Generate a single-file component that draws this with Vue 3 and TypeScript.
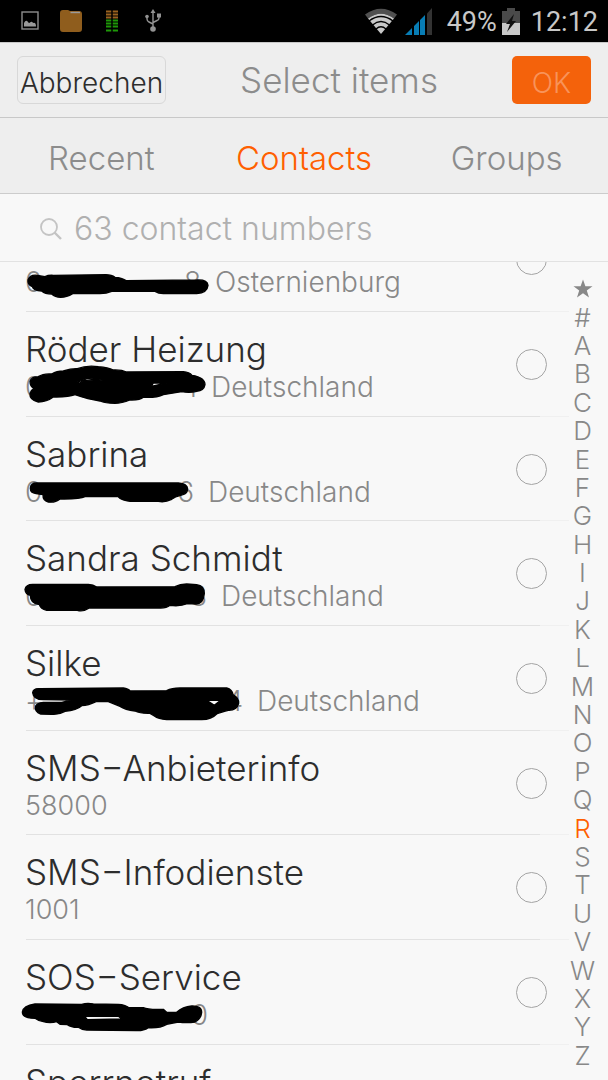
<script setup lang="ts">
import { ref } from 'vue'

interface Contact {
  id: number
  name: string
  lead?: string
  tail?: string
  number?: string
  width?: number
  place?: string
  viewBox?: string
  mark?: string
}

const tabs: string[] = ['Recent', 'Contacts', 'Groups']
const activeTab = ref('Contacts')
const activeLetter = ref('R')
const letters: string[] = ['★', '#', ...'ABCDEFGHIJKLMNOPQRSTUVWXYZ']
const query = ref('')
const selected = ref<number[]>([])

const contacts: Contact[] = [
  {
    id: 1, name: '', lead: '0', tail: '8', width: 176, place: 'Osternienburg',
    viewBox: '0 261 912 315',
    mark: 'M84 480 Q90 463 112 466 L135 470 Q145 465 160 466 L318 464 Q335 464 345 472 Q365 473 378 482 L590 480 Q622 478 624 496 Q622 518 590 521 L490 521 Q475 520 465 514 L335 514 Q320 521 300 521 L218 521 Q200 532 182 532 Q165 531 155 522 Q135 522 125 513 Q100 512 97 500 Q82 494 84 480Z',
  },
  {
    id: 2, name: 'Röder Heizung', lead: '0', tail: '1', width: 172, place: 'Deutschland',
    viewBox: '0 -24 912 315',
    mark: 'M90 184 Q94 170 115 170 Q130 160 155 162 Q170 153 190 153 Q215 145 232 146 Q260 135 295 140 Q325 143 340 150 Q365 149 380 156 L550 155 Q568 156 576 166 Q615 172 615 194 Q612 212 590 214 Q570 220 545 215 L490 224 Q470 234 430 232 Q420 241 390 240 Q365 250 345 250 Q315 250 300 243 Q265 238 225 224 Q205 232 160 231 Q140 246 115 246 Q88 240 90 220 Q93 210 102 206 Q90 200 90 184Z M230 187 L262 175 L328 183 L290 179 L250 182 L240 189Z M454 199 L460 189 L500 189Z',
  },
  {
    id: 3, name: 'Sabrina', lead: '0', tail: '6', width: 169, place: 'Deutschland',
    viewBox: '0 291 912 315',
    mark: 'M91 505 Q92 489 110 489 L535 489 Q562 491 563 507 Q562 523 542 526 Q525 530 515 538 Q495 548 475 544 L390 544 Q365 542 354 530 L255 530 Q240 538 180 537 Q165 549 145 546 Q128 541 129 524 L108 521 Q91 519 91 505Z',
  },
  {
    id: 4, name: 'Sandra Schmidt', lead: '0', tail: '3', width: 182, place: 'Deutschland',
    viewBox: '0 -57 912 315',
    mark: 'M75 148 Q78 133 98 133 L265 133 Q280 134 290 141 L525 140 Q540 132 560 132 L590 134 Q613 138 613 160 Q611 190 588 192 L562 191 Q540 200 510 196 Q498 206 475 204 L268 204 Q250 216 232 211 L140 211 Q122 207 118 194 Q91 191 91 166 Q76 162 75 148Z',
  },
  {
    id: 5, name: 'Silke', lead: '+', tail: '4', width: 218, place: 'Deutschland',
    viewBox: '0 258 912 315',
    mark: 'M98 458 Q100 444 120 446 L370 444 Q385 446 390 453 L500 452 Q515 444 540 444 L680 444 Q697 449 699 464 Q717 474 716 490 Q710 512 685 511 Q660 517 650 522 Q635 538 605 539 L500 539 Q475 537 463 528 L450 520 Q420 521 405 513 Q375 509 360 499 L325 485 L290 484 Q265 496 245 497 Q230 511 195 514 Q175 525 155 523 L122 522 Q103 517 107 498 Q112 488 130 487 L185 487 L218 480 L130 479 Q100 479 98 458Z M620 481 L662 481 L643 496Z',
  },
  { id: 6, name: 'SMS−Anbieterinfo', number: '58000' },
  { id: 7, name: 'SMS−Infodienste', number: '1001' },
  {
    id: 8, name: 'SOS−Service', lead: '', tail: '0', width: 183,
    viewBox: '0 0 912 315',
    mark: 'M67 216 Q70 197 105 192 L245 193 Q262 188 280 192 L355 193 Q375 194 385 202 L430 203 Q445 210 490 208 L500 217 L530 217 Q548 200 575 198 Q605 197 605 217 Q603 237 585 246 Q560 250 535 246 L500 253 Q480 265 445 263 Q430 273 410 272 L260 270 Q245 270 235 262 Q215 263 202 254 L180 253 L170 245 Q150 251 130 245 Q115 243 105 235 Q67 235 67 216Z M254 229 L355 229 L366 237 L262 239Z',
  },
  { id: 9, name: 'Sperrnotruf', number: '' },
]
</script>

<template>
  <div class="screen">
    <div class="status">
      <div class="status-left">
        <svg class="ic" width="20" height="20" viewBox="0 0 20 20">
          <rect x="2" y="1" width="16" height="17" fill="none" stroke="#8d8d8d" stroke-width="1.4" />
          <path d="M4 15.500V12Q6 8 8 11Q9 12.500 10 11.500Q12 10 13 12Q16 11 16 15.500Z" fill="#999" />
        </svg>
        <svg class="ic" width="22" height="24" viewBox="0 0 22 24">
          <path d="M0 4Q0 1 3 1H8L10 2H19Q22 2 22 5V20Q22 23 19 23H3Q0 23 0 20Z" fill="#8f5d1d" />
          <path d="M10.500 3.500H20" stroke="#9a9a9a" stroke-width="1.400" />
        </svg>
        <svg class="ic" width="20" height="22" viewBox="-3 0 20 22">
          <path d="M1 1.500H13M1 4.500H13M1 7.500H13" stroke="#9a6220" stroke-width="2" />
          <path d="M1 10.500H13M1 13.500H13M1 16.500H13M1 20.500H13" stroke="#1e9808" stroke-width="2" />
          <path d="M7 0V22" stroke="#000" stroke-width="1.500" />
        </svg>
        <svg class="ic" width="19" height="24" viewBox="-3 0 19 24" fill="none" stroke="#939393" stroke-width="1.400">
          <path d="M8 3V20M2 8V10Q2 12 4 13L8 15M14 7V9Q14 11 12 11.500L8 13.500" />
          <path d="M8 0L5.500 4H10.500Z" fill="#939393" stroke="none" />
          <circle cx="8" cy="20" r="2.800" fill="#939393" stroke="none" />
          <circle cx="2" cy="7.500" r="1.800" fill="#939393" stroke="none" />
          <path d="M12 4.500H16V8.500H12Z" fill="#939393" stroke="none" />
        </svg>
      </div>
      <div class="status-right">
        <svg width="32" height="26" viewBox="0 0 32 26">
          <path d="M0 6.500Q16 -5 32 6.500L29 10.500Q16 1 3 10.500Z" fill="#505050" />
          <path d="M3 10.500Q16 1 29 10.500L16 26Z" fill="#c8c8c8" />
          <path d="M4 13Q16 4 28 13M7.500 17Q16 10 24.500 17M11 21Q16 16.500 21 21" fill="none" stroke="#000" stroke-width="1.400" />
        </svg>
        <svg width="28" height="27" viewBox="0 0 28 27">
          <path d="M0 27L8 19V27Z M9 18L14 13V27H9Z M15 12L20 7V27H15Z" fill="#087db5" />
          <path d="M22 5.500L27 0V27H22Z" fill="#333" />
          <path d="M7.500 18V27" stroke="#000" />
        </svg>
        <span class="battery">49%</span>
        <svg width="21" height="27" viewBox="0 0 21 27">
          <path d="M0 3H5V0H13V3H18V15H0Z" fill="#4a4a4a" />
          <path d="M0 15H18V27H0Z" fill="#c8c8c8" />
          <path d="M12 6L4 16H8L5 24L14 13H10Z" fill="#111" />
        </svg>
        <span class="clock">12:12</span>
      </div>
    </div>

    <header class="header">
      <button type="button" class="cancel">Abbrechen</button>
      <h1 class="title">Select items</h1>
      <button type="button" class="ok">OK</button>
    </header>

    <nav class="tabs">
      <button
        v-for="tab in tabs"
        :key="tab"
        type="button"
        class="tab"
        :class="{ active: tab === activeTab }"
        @click="activeTab = tab"
      >{{ tab }}</button>
    </nav>

    <label class="search">
      <svg width="22" height="22" viewBox="0 0 22 22" fill="none" stroke="#c4c4c4">
        <circle cx="9" cy="9" r="8" stroke-width="1.800" />
        <path d="M14.500 14.500L21 21" stroke-width="2.400" />
      </svg>
      <input v-model="query" type="text" placeholder="63 contact numbers" aria-label="Search contacts">
    </label>

    <div class="body">
      <ul class="list">
        <li v-for="c in contacts" :key="c.id" class="item">
          <label class="row">
            <span class="info">
              <span class="name">{{ c.name }}</span>
              <span class="detail">
                <span v-if="c.mark" class="number" :style="{ width: c.width + 'px' }">
                  <span>{{ c.lead }}</span><span>{{ c.tail }}</span>
                </span>
                <span v-else class="short">{{ c.number }}</span>
                <span v-if="c.place">{{ c.place }}</span>
              </span>
            </span>
            <input v-model="selected" class="pick" type="checkbox" :value="c.id">
            <svg v-if="c.mark" class="mark" width="304" height="105" :viewBox="c.viewBox">
              <path :d="c.mark" fill-rule="evenodd" stroke="#000" stroke-width="4" stroke-linejoin="round" />
            </svg>
          </label>
        </li>
      </ul>
      <nav class="index" aria-label="Alphabet">
        <button
          v-for="l in letters"
          :key="l"
          type="button"
          class="letter"
          :class="{ active: l === activeLetter }"
          @click="activeLetter = l"
        >
          <svg v-if="l === '★'" width="20" height="20" viewBox="0 0 20 20" aria-label="Favourites">
            <path d="M10 0.500L12.400 7.200H19.500L13.800 11.400L16 18.500L10 14.200L4 18.500L6.200 11.400L0.500 7.200H7.600Z" fill="#888" />
          </svg>
          <template v-else>{{ l }}</template>
        </button>
      </nav>
    </div>
  </div>
</template>

<style>
html,
body {
  background: #f8f8f8;
}
</style>

<style scoped>
.screen {
  display: flex;
  flex-direction: column;
  height: 100vh;
  overflow: hidden;
  background: #f8f8f8;
  color: #2d2d2d;
  font-family: Inter, "Liberation Sans", sans-serif;
  font-weight: 300;
}

button,
input {
  font: inherit;
  color: inherit;
  margin: 0;
  padding: 0;
  border: 0;
  background: none;
}

.status {
  flex: none;
  display: flex;
  justify-content: space-between;
  height: 42px;
  box-sizing: border-box;
  padding: 0 10px 0 20px;
  background: #000;
  color: #c8c8c8;
  font-family: Roboto, sans-serif;
  font-weight: 400;
  font-size: 27px;
}

.status-left,
.status-right {
  display: flex;
  align-items: center;
}

.status-left {
  gap: 20px;
}

.status-right {
  gap: 8px;
}

.battery,
.clock {
  padding-top: 2px;
  line-height: 44px;
}

.battery {
  margin: 0 -3px 0 6px;
}

.header {
  flex: none;
  display: flex;
  align-items: center;
  justify-content: space-between;
  height: 76px;
  box-sizing: border-box;
  padding: 0 17px;
  background: #eee;
  border-top: 1px solid #c8c8c8;
  border-bottom: 1px solid #c8c8c8;
}

.cancel,
.ok {
  height: 48px;
  box-sizing: border-box;
  padding-top: 5px;
  font-size: 28px;
  line-height: 40px;
}

.cancel {
  width: 149px;
  border: 1px solid #d8d8d8;
  border-radius: 6px;
}

.title {
  margin: 0;
  font-size: 35px;
  font-weight: 300;
  color: #8c8c8c;
}

.ok {
  width: 79px;
  border-radius: 5px;
  background: #f4620b;
  color: #f8935a;
}

.tabs {
  flex: none;
  display: flex;
  height: 76px;
  box-sizing: border-box;
  background: #eee;
  border-bottom: 1px solid #ccc;
}

.tab {
  flex: 1;
  padding-top: 4px;
  font-size: 33px;
  color: #8c8c8c;
}

.tab.active {
  color: #ff5f00;
}

.search {
  flex: none;
  display: flex;
  align-items: center;
  gap: 12px;
  height: 68px;
  box-sizing: border-box;
  padding: 2px 40px 0;
  border-bottom: 1px solid #e2e2e2;
}

.search input {
  flex: 1;
  min-width: 0;
  font-size: 32px;
  outline: none;
}

.search input::placeholder {
  color: #b0b0b0;
  opacity: 1;
}

.body {
  flex: 1;
  min-height: 0;
  display: flex;
  overflow: hidden;
}

.list {
  flex: 1;
  min-width: 0;
  margin: -55px 0 0;
  padding: 0;
  list-style: none;
}

.row {
  position: relative;
  display: flex;
  justify-content: space-between;
  height: 105px;
  box-sizing: border-box;
  padding: 0 22px 0 25px;
}

.item:nth-child(3n) .row {
  height: 104px;
}

.row::after {
  content: "";
  position: absolute;
  left: 26px;
  right: 0;
  bottom: 0;
  height: 1px;
  background: linear-gradient(to left, #f0f0f0 29px, #e2e2e2 29px);
}

.info {
  display: flex;
  flex-direction: column;
  padding-top: 17px;
}

.name {
  height: 40px;
  line-height: 40px;
  font-size: 35px;
  white-space: nowrap;
}

.detail {
  display: flex;
  gap: 14px;
  line-height: 36px;
  font-size: 28px;
  color: #888;
  white-space: nowrap;
}

.short {
  font-size: 27px;
}

.number {
  display: flex;
  justify-content: space-between;
}

.pick {
  appearance: none;
  flex: none;
  width: 31px;
  height: 31px;
  margin-top: 37px;
  box-sizing: border-box;
  border: 1px solid #a4a4a4;
  border-radius: 50%;
}

.pick:checked {
  background: #ff5f00;
}

.mark {
  position: absolute;
  left: 0;
  top: 0;
  overflow: visible;
}

.index {
  flex: none;
  width: 39px;
  box-sizing: border-box;
  display: flex;
  flex-direction: column;
  padding: 13px 12px 10px 0;
}

.letter {
  flex: 1;
  min-height: 0;
  display: flex;
  align-items: center;
  justify-content: center;
  font-size: 26px;
  line-height: 28px;
  color: #888;
}

.letter svg {
  flex: none;
}

.letter.active {
  color: #ff5f00;
}
</style>
